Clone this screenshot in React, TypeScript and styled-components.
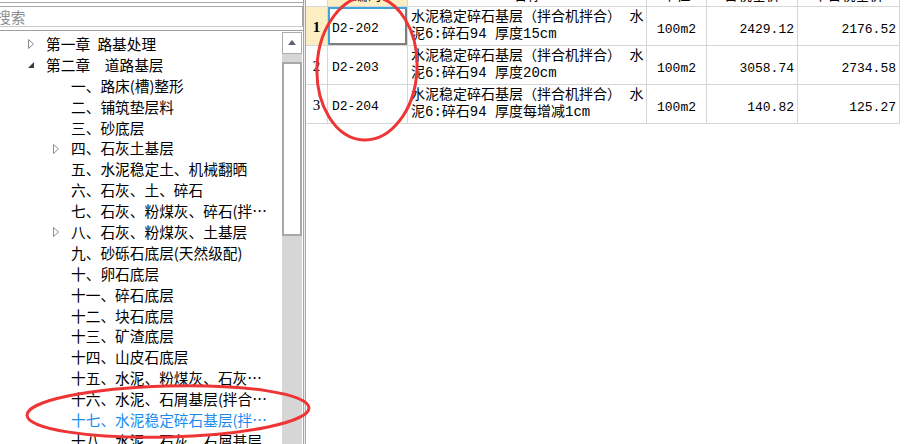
import React from "react";
import styled, { createGlobalStyle } from "styled-components";

const GlobalStyle = createGlobalStyle`
  html, body {
    margin: 0;
    padding: 0;
    background: #fff;
    overflow: hidden;
  }
  #root {
    width: 915px;
    height: 444px;
  }
`;

type TreeItem = {
  label: string;
  level: number;
  toggle?: "open" | "closed";
  selected?: boolean;
};

const treeItems: TreeItem[] = [
  { label: "第一章\u2002路基处理", level: 0, toggle: "closed" },
  { label: "第二章\u3000道路基层", level: 0, toggle: "open" },
  { label: "一、路床(槽)整形", level: 1 },
  { label: "二、铺筑垫层料", level: 1 },
  { label: "三、砂底层", level: 1 },
  { label: "四、石灰土基层", level: 1, toggle: "closed" },
  { label: "五、水泥稳定土、机械翻晒", level: 1 },
  { label: "六、石灰、土、碎石", level: 1 },
  { label: "七、石灰、粉煤灰、碎石(拌合机拌合)", level: 1 },
  { label: "八、石灰、粉煤灰、土基层", level: 1, toggle: "closed" },
  { label: "九、砂砾石底层(天然级配)", level: 1 },
  { label: "十、卵石底层", level: 1 },
  { label: "十一、碎石底层", level: 1 },
  { label: "十二、块石底层", level: 1 },
  { label: "十三、矿渣底层", level: 1 },
  { label: "十四、山皮石底层", level: 1 },
  { label: "十五、水泥、粉煤灰、石灰、碎石基层", level: 1 },
  { label: "十六、水泥、石屑基层(拌合机拌合)", level: 1 },
  { label: "十七、水泥稳定碎石基层(拌合机拌合)", level: 1, selected: true },
  { label: "十八、水泥、石灰、石屑基层", level: 1 },
];

type QuotaRow = {
  code: string;
  name: string;
  unit: string;
  price: string;
  priceNoTax: string;
};

const quotaRows: QuotaRow[] = [
  {
    code: "D2-202",
    name: "水泥稳定碎石基层（拌合机拌合） 水\n泥6:碎石94 厚度15cm",
    unit: "100m2",
    price: "2429.12",
    priceNoTax: "2176.52",
  },
  {
    code: "D2-203",
    name: "水泥稳定碎石基层（拌合机拌合） 水\n泥6:碎石94 厚度20cm",
    unit: "100m2",
    price: "3058.74",
    priceNoTax: "2734.58",
  },
  {
    code: "D2-204",
    name: "水泥稳定碎石基层（拌合机拌合） 水\n泥6:碎石94 厚度每增减1cm",
    unit: "100m2",
    price: "140.82",
    priceNoTax: "125.27",
  },
];

const ToggleIcon: React.FC<{ state: "open" | "closed" }> = ({ state }) =>
  state === "closed" ? (
    <svg width="8" height="12" viewBox="0 0 8 12">
      <polygon points="1.5,1.5 6.5,6 1.5,10.5" fill="#fff" stroke="#8e8e8e" strokeWidth="1" />
    </svg>
  ) : (
    <svg width="8" height="12" viewBox="0 0 8 12">
      <polygon points="7,3 7,9 1,9" fill="#3c3c3c" />
    </svg>
  );

export default function App() {
  return (
    <Frame>
      <GlobalStyle />
      <LeftPanel>
        <TopRule />
        <SearchBox>搜索</SearchBox>
        <TreeBox>
          <TreeList>
            {treeItems.map((item, i) => (
              <TreeRow key={i} $level={item.level} $selected={item.selected}>
                <ToggleSlot>{item.toggle && <ToggleIcon state={item.toggle} />}</ToggleSlot>
                <TreeLabel>{item.label}</TreeLabel>
              </TreeRow>
            ))}
          </TreeList>
          <ScrollBar>
            <ScrollButton>
              <UpArrow />
            </ScrollButton>
            <ScrollThumb />
          </ScrollBar>
        </TreeBox>
      </LeftPanel>

      <Splitter />

      <RightPanel>
        <Grid>
          <HeaderCell />
          <HeaderCell $highlight><HeaderText>编码</HeaderText></HeaderCell>
          <HeaderCell><HeaderText>名称</HeaderText></HeaderCell>
          <HeaderCell><HeaderText>单位</HeaderText></HeaderCell>
          <HeaderCell><HeaderText>含税基价</HeaderText></HeaderCell>
          <HeaderCell><HeaderText>不含税基价</HeaderText></HeaderCell>

          {quotaRows.map((row, i) => (
            <React.Fragment key={row.code}>
              <RowNumber $current={i === 0}>{i + 1}</RowNumber>
              <CodeCell $active={i === 0}>{row.code}</CodeCell>
              <NameCell>{row.name}</NameCell>
              <UnitCell>{row.unit}</UnitCell>
              <NumberCell>{row.price}</NumberCell>
              <NumberCell>{row.priceNoTax}</NumberCell>
            </React.Fragment>
          ))}
        </Grid>
      </RightPanel>

      <Annotations width="915" height="444" viewBox="0 0 915 444">
        <ellipse cx="168" cy="411.5" rx="141" ry="25.5" transform="rotate(-1.5 168 411.5)" />
        <ellipse cx="367" cy="68" rx="50" ry="72" transform="rotate(3 367 68)" />
      </Annotations>
    </Frame>
  );
}

const Frame = styled.div`
  position: relative;
  display: flex;
  width: 915px;
  height: 444px;
  overflow: hidden;
  background: #fff;
  font-family: "Noto Sans CJK SC", "Noto Sans", sans-serif;
  color: #000;
`;

const LeftPanel = styled.div`
  width: 303px;
  flex-shrink: 0;
  display: flex;
  flex-direction: column;
`;

const TopRule = styled.div`
  height: 2px;
  flex-shrink: 0;
  border-bottom: 1px solid #a9a9a9;
`;

const SearchBox = styled.div`
  box-sizing: border-box;
  flex-shrink: 0;
  margin: 3px 0 0 -2px;
  width: 305px;
  height: 21px;
  border: 1px solid #a7a7a7;
  border-bottom-color: #cacaca;
  font-size: 14.7px;
  line-height: 19px;
  text-indent: -3px;
  color: #8c8c8c;
  white-space: nowrap;
  overflow: hidden;
`;

const TreeBox = styled.div`
  flex: 1;
  min-height: 0;
  margin-top: 3px;
  display: flex;
  border-top: 1px solid #a0a0a0;
`;

const TreeList = styled.div`
  flex: 1;
  min-width: 0;
  padding-top: 3px;
  overflow: hidden;
`;

const TreeRow = styled.div<{ $level: number; $selected?: boolean }>`
  display: flex;
  align-items: center;
  height: 20.9px;
  padding-left: ${(p) => 27 + p.$level * 25}px;
  padding-right: 10px;
  font-size: 14.7px;
  line-height: 20.9px;
  white-space: pre;
  color: ${(p) => (p.$selected ? "#1a8cee" : "#000")};
`;

const ToggleSlot = styled.span`
  width: 19px;
  flex-shrink: 0;
  display: flex;
  align-items: center;
`;

const TreeLabel = styled.span`
  flex: 1;
  min-width: 0;
  overflow: hidden;
  text-overflow: ellipsis;
`;

const ScrollBar = styled.div`
  width: 20px;
  flex-shrink: 0;
  margin-right: 1px;
  display: flex;
  flex-direction: column;
  background: #d6d6d6;
  border-top: 1px solid #fff;
`;

const ScrollButton = styled.div`
  box-sizing: border-box;
  height: 22px;
  border: 1px solid #acacac;
  background: #fff;
  display: flex;
  align-items: center;
  justify-content: center;
`;

const UpArrow = styled.span`
  width: 0;
  height: 0;
  border-left: 4.5px solid transparent;
  border-right: 4.5px solid transparent;
  border-bottom: 5px solid #5b6172;
  margin-top: -1px;
`;

const ScrollThumb = styled.div`
  box-sizing: border-box;
  margin-top: 8px;
  height: 174px;
  border: 2px solid #a8a8a8;
  background: #fff;
`;

const Splitter = styled.div`
  width: 1px;
  flex-shrink: 0;
  border-left: 1px solid #a4a4a4;
  border-right: 1px solid #a4a4a4;
  background: #eeeeee;
`;

const RightPanel = styled.div`
  flex: 1;
  min-width: 0;
`;

const Grid = styled.div`
  display: grid;
  grid-template-columns: 22px 80px 239px 60px 91px 102px;
  grid-template-rows: 7px repeat(3, 39px);
  width: 594px;
`;

const Cell = styled.div`
  box-sizing: border-box;
  border-right: 1px solid #d6d6d6;
  border-bottom: 1px solid #d6d6d6;
  overflow: hidden;
  white-space: pre;
`;

const HeaderCell = styled(Cell)<{ $highlight?: boolean }>`
  display: flex;
  align-items: flex-end;
  justify-content: center;
  background: ${(p) => (p.$highlight ? "#fcedc2" : "#fff")};
`;

const HeaderText = styled.span`
  font-size: 14px;
  line-height: 16px;
  margin-bottom: 4px;
`;

const RowNumber = styled(Cell)<{ $current?: boolean }>`
  display: flex;
  align-items: center;
  justify-content: center;
  padding-top: 3px;
  background: ${(p) => (p.$current ? "#fcedc2" : "#fff")};
  font-family: "Liberation Serif", serif;
  font-size: 15px;
  font-weight: ${(p) => (p.$current ? 700 : 400)};
`;

const CodeCell = styled(Cell)<{ $active?: boolean }>`
  display: flex;
  align-items: center;
  padding: 5px 0 0 4px;
  font-family: "Liberation Mono", monospace;
  font-size: 13px;
  box-shadow: ${(p) =>
    p.$active ? "inset 2px 2px 0 #3ea4dc, inset -2px -2px 0 #7e7e7e" : "none"};
`;

const NameCell = styled(Cell)`
  display: flex;
  align-items: center;
  padding-left: 3px;
  font-family: "Liberation Mono", "Noto Sans CJK SC", monospace;
  font-size: 14px;
  line-height: 17px;
`;

const UnitCell = styled(Cell)`
  display: flex;
  align-items: center;
  justify-content: center;
  padding-top: 6px;
  font-family: "Liberation Mono", monospace;
  font-size: 13px;
`;

const NumberCell = styled(Cell)`
  display: flex;
  align-items: center;
  justify-content: flex-end;
  padding: 6px 3px 0 0;
  font-family: "Liberation Mono", monospace;
  font-size: 13px;
`;

const Annotations = styled.svg`
  position: absolute;
  left: 0;
  top: 0;
  pointer-events: none;
  fill: none;
  stroke: #ee3535;
  stroke-width: 3;
`;
